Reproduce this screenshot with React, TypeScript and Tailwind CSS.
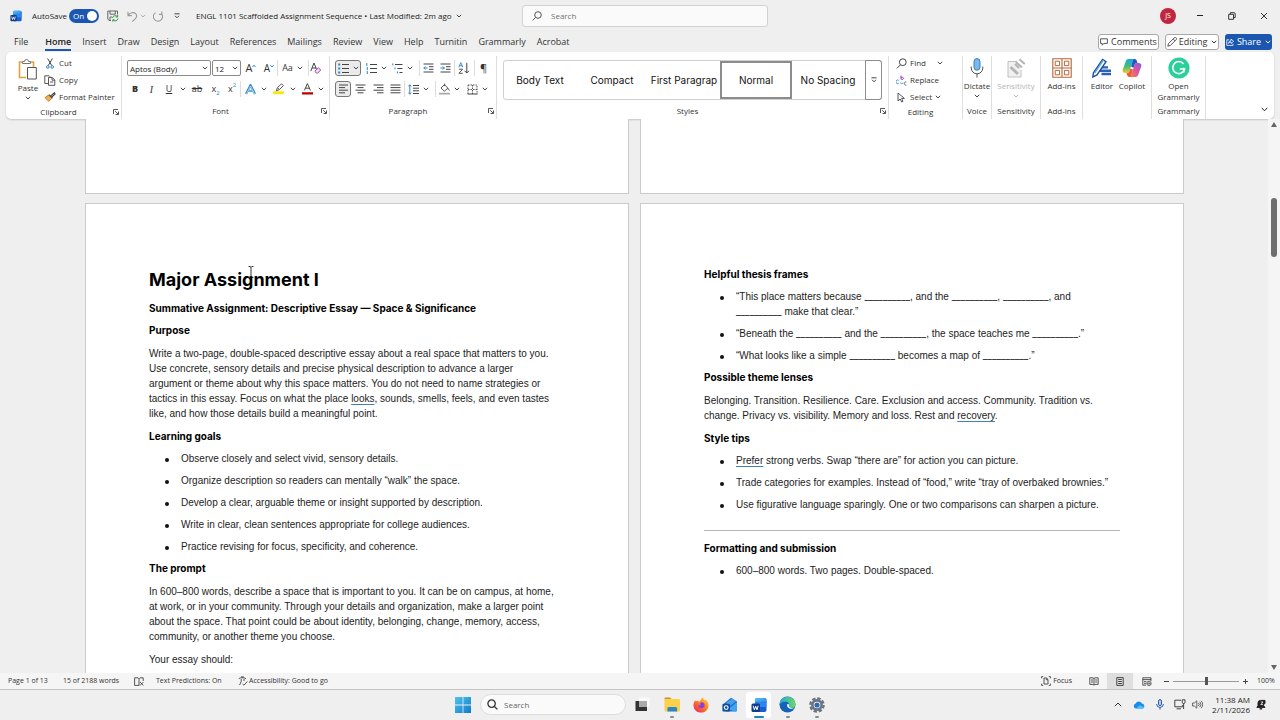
import React from "react";

type Kids = { children?: React.ReactNode };

function Svg({ w, h, vb, className = "", children }: Kids & { w: number; h: number; vb?: string; className?: string }) {
  return (
    <svg width={w} height={h} viewBox={vb ?? `0 0 ${w} ${h}`} fill="none" stroke="#444" strokeWidth="1" className={`shrink-0 ${className}`} aria-hidden="true">
      {children}
    </svg>
  );
}

function Chev({ className = "text-[#444]" }: { className?: string }) {
  return (
    <svg width="6" height="4" viewBox="0 0 6 4" fill="none" stroke="currentColor" strokeWidth="1" className={`shrink-0 ${className}`} aria-hidden="true">
      <path d="M0.8 0.8 3 3 5.2 0.8" />
    </svg>
  );
}

function Btn({ label, className, children }: Kids & { label: string; className: string }) {
  return (
    <button type="button" aria-label={label} className={`flex h-4 shrink-0 items-center justify-center ${className}`}>
      {children}
    </button>
  );
}

function Sep() {
  return <span className="-mr-px h-4 w-px shrink-0 bg-[#dcdcdc]" />;
}

function Group({ name, className, launcher, children }: Kids & { name: string; className: string; launcher?: boolean }) {
  return (
    <section aria-label={name} className={`flex shrink-0 flex-col border-r border-[#dedede] ${className}`}>
      <div className="h-12">{children}</div>
      <div className={`relative flex h-4 items-center justify-center text-[8px] leading-4 text-[#333] ${launcher ? "pr-[10px]" : ""}`}>
        {name}
        {launcher && (
          <button type="button" aria-label={`${name} settings`} className="absolute right-[2px] top-[5px]">
            <Svg w={6} h={6}>
              <path d="M0.5 5V0.5H5M2.2 2.2 5.2 5.2M5.5 2.5V5.5H2.5" strokeWidth="0.9" />
            </Svg>
          </button>
        )}
      </div>
    </section>
  );
}

function BigBtn({ label, className = "", dim, chev, children }: Kids & { label: React.ReactNode; className?: string; dim?: boolean; chev?: boolean }) {
  return (
    <button type="button" className={`flex flex-col items-center text-[8px] leading-[11px] ${dim ? "text-[#b5b5b5]" : "text-[#333]"} ${className}`}>
      <span className="flex h-6 items-center justify-center">{children}</span>
      <span className="block">{label}</span>
      {chev && <Chev className={dim ? "mt-[3px] text-[#b5b5b5]" : "mt-[3px] text-[#444]"} />}
    </button>
  );
}

function Bars({ xs }: { xs: [number, number][] }) {
  return (
    <Svg w={11} h={10}>
      {xs.map(([a, b], i) => (
        <path key={i} d={`M${a} ${1 + i * 2.6}H${b}`} />
      ))}
    </Svg>
  );
}

function WordLogo({ size }: { size: number }) {
  return (
    <svg width={size} height={size} viewBox="0 0 16 16" className="shrink-0" aria-hidden="true">
      <defs>
        <linearGradient id="wl" x1="0" y1="0" x2="1" y2="1">
          <stop offset="0" stopColor="#58c8f5" />
          <stop offset="1" stopColor="#2b7de9" />
        </linearGradient>
      </defs>
      <rect x="4" y="1" width="11.5" height="14" rx="2" fill="#1a5fd0" />
      <path d="M6 1h7.5a2 2 0 0 1 2 2v2.5H4V3a2 2 0 0 1 2-2z" fill="url(#wl)" />
      <path d="M4 5.5h11.5V10H4z" fill="#2f86ee" />
      <rect x="0.5" y="6.5" width="8.5" height="8.5" rx="1.5" fill="#0f3c8f" />
      <path d="M2.2 8.8l1.2 4 1.3-3.6 1.3 3.6 1.2-4" stroke="#fff" strokeWidth="1" fill="none" />
    </svg>
  );
}

function TitleBar() {
  return (
    <header className="grid h-8 shrink-0 grid-cols-[1fr_246px_1fr] items-center pl-[10px] text-[8px] text-[#222]">
      <div className="flex items-center">
        <WordLogo size={12} />
        <label className="ml-[10px] flex items-center gap-[6px]">
          <span className="w-[31px] whitespace-nowrap">AutoSave</span>
          <span className="relative flex h-[14px] w-[30px] items-center rounded-full bg-[#1b57b0] pl-1 text-white">
            <input type="checkbox" defaultChecked className="absolute inset-0 appearance-none" />
            On
            <span className="ml-auto mr-[2px] size-[10px] rounded-full bg-white" />
          </span>
        </label>
        <Btn label="Save" className="ml-[7px] w-[14px]">
          <Svg w={12} h={12}>
            <path d="M4 10.5H2L0.8 9V1H10.5V4.5M3 1V4.2H8.3V1M3 10.5V7H5" stroke="#666" />
            <path d="M5.5 8A2.8 2.8 0 0 1 10.5 6.8M10.7 5V7H8.8M11 8.6A2.8 2.8 0 0 1 6.2 10M5.8 11.6V9.8H7.6" stroke="#2a9a4c" />
          </Svg>
        </Btn>
        <Btn label="Undo" className="ml-[6px] w-3">
          <Svg w={11} h={11}>
            <path d="M1 0.8V4.6H4.8M1.2 4.4C3 1.6 6.5 0.8 8.6 2.6C10.6 4.6 9.6 6.4 8.2 7.8L5.2 10.6" stroke="#9a9a9a" strokeWidth="1.1" />
          </Svg>
        </Btn>
        <Chev className="ml-[2px] text-[#b0b0b0]" />
        <Btn label="Redo" className="ml-[6px] w-3">
          <Svg w={11} h={11}>
            <path d="M8.8 0.6V3.4H6M2.6 1.6A4.6 4.6 0 1 0 8.6 2.8" stroke="#9a9a9a" strokeWidth="1.1" />
          </Svg>
        </Btn>
        <Btn label="Customize toolbar" className="ml-[9px] w-2">
          <Svg w={6} h={6}>
            <path d="M0.5 0.8H5.5M1 2.8 3 4.8 5 2.8" />
          </Svg>
        </Btn>
        <button type="button" className="ml-[15px] flex items-center gap-1 whitespace-nowrap">
          <span>ENGL 1101 Scaffolded Assignment Sequence • Last Modified: 2m ago</span>
          <Chev />
        </button>
      </div>
      <label className="flex h-[22px] items-center gap-[9px] rounded-[3px] border border-[#d2d2d2] bg-[#fafafa] pl-[9px]">
        <Svg w={10} h={10}>
          <circle cx="6" cy="4" r="3.3" stroke="#555" />
          <path d="M3.6 6.4 0.6 9.4" stroke="#555" />
        </Svg>
        <input aria-label="Search" placeholder="Search" className="w-full bg-transparent text-[8px] outline-none placeholder:text-[#707070]" />
      </label>
      <div className="flex items-center justify-end">
        <button type="button" className="mr-2 flex size-4 items-center justify-center rounded-full bg-[#c0273e] text-[7px] text-white">JS</button>
        <Btn label="Minimize" className="w-8"><Svg w={8} h={8}><path d="M1 3.5H7" stroke="#222" /></Svg></Btn>
        <Btn label="Restore" className="w-8"><Svg w={8} h={8}><path d="M0.7 2.3H5.5V7.3H0.7ZM2.3 2V0.7H6.2A1 1 0 0 1 7.2 1.7V5.6H5.8" stroke="#222" strokeWidth="0.9" /></Svg></Btn>
        <Btn label="Close" className="w-8"><Svg w={8} h={8}><path d="M1 1 7 7M7 1 1 7" stroke="#222" strokeWidth="0.9" /></Svg></Btn>
      </div>
    </header>
  );
}

const TABS = ["Home", "Insert", "Draw", "Design", "Layout", "References", "Mailings", "Review", "View", "Help", "Turnitin", "Grammarly", "Acrobat"];

function TabBar() {
  return (
    <div className="flex h-5 shrink-0 items-center pl-[14px] pr-2 text-[9px] text-[#333]">
      <button type="button" className="mr-[17px] border-b-2 border-transparent leading-[15px]">File</button>
      <nav className="flex gap-[11px]">
        {TABS.map((t) => (
          <button key={t} type="button" className={t === "Home" ? "border-b-2 border-[#1b57b0] font-semibold leading-[15px] text-[#222]" : "border-b-2 border-transparent leading-[15px]"}>
            {t}
          </button>
        ))}
      </nav>
      <div className="ml-auto flex gap-[6px]">
        <button type="button" className="flex h-4 w-[61px] items-center justify-center gap-[3px] rounded-[3px] border border-[#a8a8a8] bg-white">
          <Svg w={8} h={8}><path d="M0.6 0.8H7.4V5.4H3.8L2.2 7.2V5.4H0.6Z" strokeWidth="0.9" /></Svg>
          Comments
        </button>
        <button type="button" className="flex h-4 w-[54px] items-center justify-center gap-[2px] rounded-[3px] border border-[#a8a8a8] bg-white">
          <Svg w={10} h={10}><path d="M0.8 9.2 1.6 6.4 7.4 0.8A1.2 1.2 0 0 1 9.2 2.6L3.5 8.4ZM6.2 2 8 3.8" strokeWidth="0.9" /></Svg>
          Editing
          <Chev className="ml-[2px] text-[#333]" />
        </button>
        <button type="button" className="flex h-4 w-[47px] items-center justify-center gap-[3px] rounded-[3px] bg-[#1b57b0] text-white">
          <Svg w={8} h={8}><path d="M3 1.8H0.8V7.4H7V5.8M2.4 5.4C2.6 3.6 3.8 2.8 5 2.8V1L7.6 3.3 5 5.5V4C4 4 3.2 4.4 2.4 5.4Z" stroke="#fff" strokeWidth="0.8" /></Svg>
          Share
          <Chev className="ml-[1px] text-white" />
        </button>
      </div>
    </div>
  );
}

function Combo({ label, value, className }: { label: string; value: string; className: string }) {
  return (
    <label className={`flex h-4 shrink-0 items-center rounded-[2px] border border-[#8a8a8a] bg-white pr-[2px] ${className}`}>
      <select aria-label={label} className="min-w-0 flex-1 appearance-none bg-transparent pl-[2px] text-[8px] leading-[13px] text-[#222] outline-none">
        <option>{value}</option>
      </select>
      <Chev />
    </label>
  );
}

function ClipboardGroup() {
  return (
    <Group name="Clipboard" className="w-[116px]" launcher>
      <div className="flex gap-[6px] pl-[10px]">
        <BigBtn label="Paste" className="w-[24px] pt-[2px]" chev>
          <Svg w={20} h={22}>
            <path d="M4 3H1.5V18.5H8M13 3H15.5V8" stroke="#e0a23c" strokeWidth="1.6" />
            <path d="M4.5 4.5V2.5H6.5A2 2 0 0 1 10.5 2.5H12.5V4.5Z" fill="#fff" stroke="#777" />
            <path d="M9.5 8.5H18.3V20H9.5Z" fill="#fff" stroke="#555" />
          </Svg>
        </BigBtn>
        <div className="flex flex-col gap-[3px] text-[8px] leading-[14px] text-[#333]">
          <button type="button" className="flex items-center gap-[5px]">
            <Svg w={8} h={11}>
              <path d="M1.6 0.5 5.8 7.6M6.4 0.5 2.2 7.6" stroke="#444" />
              <circle cx="1.8" cy="9" r="1.3" stroke="#2b88c9" /><circle cx="6.2" cy="9" r="1.3" stroke="#2b88c9" />
            </Svg>
            Cut
          </button>
          <button type="button" className="-ml-[2px] flex items-center gap-[3px]">
            <Svg w={12} h={11}>
              <path d="M4.5 8.5H0.8V0.8H5.2L6.2 1.8M4.5 2.5H8.3L10.8 5V10.3H4.5ZM8 2.6V5.2H10.7M6 7H9.2" strokeWidth="0.9" />
            </Svg>
            Copy
          </button>
          <button type="button" className="-ml-[2px] flex items-center gap-[3px] whitespace-nowrap">
            <Svg w={12} h={10}>
              <path d="M1 5.6 4.6 3 7.8 6.4 4.8 9.4Z" fill="#f0b155" stroke="#c9822a" />
              <path d="M5 2.6 8.4 6M7 3.6 10.4 0.8 11 2.2 8 4.8" stroke="#444" strokeWidth="1.2" />
            </Svg>
            Format Painter
          </button>
        </div>
      </div>
    </Group>
  );
}

function FontGroup() {
  return (
    <Group name="Font" className="w-[208px]" launcher>
      <div className="flex flex-col gap-[5px] pl-[5px] pt-1 text-[#333]">
        <div className="flex items-center">
          <Combo label="Font" value="Aptos (Body)" className="w-[84px]" />
          <Combo label="Font size" value="12" className="ml-px w-[29px]" />
          <Btn label="Grow font" className="ml-[2px] w-4 text-[11px]">A<Svg w={4} h={8}><path d="M0.5 3 2 1.2 3.5 3" stroke="#2b88c9" /></Svg></Btn>
          <Btn label="Shrink font" className="ml-[2px] w-4 text-[10px]">A<Svg w={4} h={8}><path d="M0.5 1.2 2 3 3.5 1.2" stroke="#2b88c9" /></Svg></Btn>
          <Sep />
          <Btn label="Change case" className="w-[31px] gap-1 text-[9px]">Aa<Chev /></Btn>
          <Sep />
          <Btn label="Clear formatting" className="w-4">
            <Svg w={12} h={12}>
              <path d="M0.8 9 4 1 6.6 7.4M2 6H6" />
              <path d="M5 9.2 8.4 5.8 10.8 8 7.6 11H6.4Z" stroke="#a444b5" fill="#f3e0f6" />
            </Svg>
          </Btn>
        </div>
        <div className="flex items-center text-[9px]">
          <Btn label="Bold" className="w-4 font-bold"><b>B</b></Btn>
          <Btn label="Italic" className="w-[17px] font-['Liberation_Serif',serif] text-[10px] italic">I</Btn>
          <Btn label="Underline" className="w-[18px] underline">U</Btn>
          <Btn label="Underline style" className="w-[9px]"><Chev /></Btn>
          <Btn label="Strikethrough" className="w-5 line-through">ab</Btn>
          <Btn label="Subscript" className="w-[17px]">x<span className="self-end text-[6px] leading-[7px] text-[#2b88c9]">2</span></Btn>
          <Btn label="Superscript" className="w-4">x<span className="self-start text-[6px] leading-[9px] text-[#2b88c9]">2</span></Btn>
          <Sep />
          <Btn label="Text effects" className="w-5">
            <Svg w={11} h={11}>
              <path d="M1 10 5.5 1.2 10 10M3 7H8" stroke="#2b88c9" strokeWidth="2.2" />
              <path d="M1.4 10 5.5 2 9.6 10M3.2 7H7.8" stroke="#fff" strokeWidth="0.6" />
            </Svg>
          </Btn>
          <Btn label="Text effects menu" className="w-2"><Chev /></Btn>
          <Btn label="Highlight" className="w-[22px]">
            <Svg w={12} h={12}>
              <path d="M0 9.8H11" stroke="#f5ea14" strokeWidth="3" />
              <path d="M3.4 7.8 4.4 4.6 8.6 0.8 10.4 2.6 6.4 6.6ZM4.6 4.8 6.2 6.4" strokeWidth="0.9" />
            </Svg>
          </Btn>
          <Btn label="Highlight menu" className="w-[6px]"><Chev /></Btn>
          <Btn label="Font color" className="w-[22px]">
            <Svg w={11} h={12}>
              <path d="M2.4 7.4 5.4 0.6 8.4 7.4M3.4 5.2H7.4" />
              <path d="M0 10.4H11" stroke="#c00000" strokeWidth="2.4" />
            </Svg>
          </Btn>
          <Btn label="Font color menu" className="w-[6px]"><Chev /></Btn>
        </div>
      </div>
    </Group>
  );
}

function ListIcon({ kind }: { kind: "dots" | "nums" | "tree" }) {
  return (
    <Svg w={11} h={11}>
      {kind === "tree" ? (
        <>
          <path d="M3 1.5H10.5M5.4 5.5H10.5M7.4 9.5H10.5" />
          <path d="M0.8 0.4V2.4M3 4.4V6.4M5.4 8.4V10.4" stroke="#2b88c9" />
        </>
      ) : (
        <>
          <path d="M4 1.5H11M4 5.5H11M4 9.5H11" />
          {kind === "dots" ? (
            <path d="M0.2 1.5H2.2M0.2 5.5H2.2M0.2 9.5H2.2" stroke="#2b88c9" strokeWidth="2" />
          ) : (
            <path d="M0.8 0V3M1.3 4V7M1.3 8V11" stroke="#2b88c9" />
          )}
        </>
      )}
    </Svg>
  );
}

function ParagraphGroup() {
  return (
    <Group name="Paragraph" className="w-[167px]" launcher>
      <div className="flex flex-col gap-[5px] pl-[5px] pt-1">
        <div className="flex items-center">
          <Btn label="Bullets" className="w-[26px] gap-1 rounded-[3px] border border-[#777] bg-[#ebebeb]"><ListIcon kind="dots" /><Chev /></Btn>
          <Btn label="Numbering" className="ml-[2px] w-[26px] gap-1"><ListIcon kind="nums" /><Chev /></Btn>
          <Btn label="Multilevel list" className="w-[27px] gap-1"><ListIcon kind="tree" /><Chev /></Btn>
          <span className="w-[3px]" />
          <Sep />
          <Btn label="Decrease indent" className="w-[18px]">
            <Svg w={11} h={10}><path d="M0.5 1H10.5M6 3.7H10.5M6 6.3H10.5M0.5 9H10.5" /><path d="M4.6 5H0.8M2.4 3.4 0.8 5 2.4 6.6" stroke="#2b88c9" /></Svg>
          </Btn>
          <Btn label="Increase indent" className="w-[17px]">
            <Svg w={11} h={10}><path d="M0.5 1H10.5M6 3.7H10.5M6 6.3H10.5M0.5 9H10.5" /><path d="M0.4 5H4.4M2.8 3.4 4.4 5 2.8 6.6" stroke="#2b88c9" /></Svg>
          </Btn>
          <Sep />
          <Btn label="Sort" className="w-[20px]">
            <Svg w={12} h={12}>
              <path d="M0.8 5.2 2.8 0.6 4.8 5.2M1.4 3.8H4.2" stroke="#2b88c9" strokeWidth="0.9" />
              <path d="M0.9 7.2H4.6L0.9 11.3H4.8" strokeWidth="0.9" />
              <path d="M8.8 0.8V11M6.6 8.8 8.8 11 11 8.8" />
            </Svg>
          </Btn>
          <Sep />
          <Btn label="Show paragraph marks" className="w-[19px] text-[11px] text-[#333]">¶</Btn>
        </div>
        <div className="flex items-center">
          <Btn label="Align left" className="w-4 rounded-[3px] border border-[#777] bg-[#ebebeb]"><Bars xs={[[1, 10], [1, 7], [1, 10], [1, 7]]} /></Btn>
          <Btn label="Center" className="ml-px w-[17px]"><Bars xs={[[0.5, 10.5], [2.5, 8.5], [0.5, 10.5], [2.5, 8.5]]} /></Btn>
          <Btn label="Align right" className="w-[18px]"><Bars xs={[[0.5, 10.5], [4, 10.5], [0.5, 10.5], [4, 10.5]]} /></Btn>
          <Btn label="Justify" className="w-[17px]"><Bars xs={[[0.5, 10.5], [0.5, 10.5], [0.5, 10.5], [0.5, 10.5]]} /></Btn>
          <Sep />
          <Btn label="Line spacing" className="ml-px w-[26px] gap-1">
            <Svg w={11} h={11}><path d="M5 1.5H11M5 4.2H11M5 6.8H11M5 9.5H11" /><path d="M1.8 0.8V10.2M0.4 2.4 1.8 0.8 3.2 2.4M0.4 8.6 1.8 10.2 3.2 8.6" stroke="#2b88c9" /></Svg>
            <Chev />
          </Btn>
          <span className="w-1" />
          <Sep />
          <Btn label="Shading" className="ml-px w-[26px] gap-1">
            <Svg w={11} h={12}><path d="M5.6 0.6V3M2 5 5.4 1.6 9 5.2 5.4 8.2ZM9 5.2 10.4 7.6" strokeWidth="0.9" /><path d="M0 10.6H11" stroke="#aaa" strokeWidth="1.8" /></Svg>
            <Chev />
          </Btn>
          <Btn label="Borders" className="ml-[2px] w-[26px] gap-1">
            <Svg w={11} h={11}><path d="M1 1H10V10M1 1V10M5.5 1V10M1 5.5H10" strokeDasharray="1.5 1" strokeWidth="0.9" /><path d="M0.5 10H10.5" strokeWidth="1.2" /></Svg>
            <Chev />
          </Btn>
        </div>
      </div>
    </Group>
  );
}

const STYLES = ["Body Text", "Compact", "First Paragrap", "Normal", "No Spacing"];

function StylesGroup() {
  return (
    <Group name="Styles" className="w-[392px]" launcher>
      <div className="mx-[6px] mt-1 flex h-10 w-[379px] rounded-[3px] border border-[#cfcfcf] font-['Inter',sans-serif] text-[10px] text-[#111]">
        {STYLES.map((s) => (
          <button key={s} type="button" className={s === "Normal" ? "w-[72px] whitespace-nowrap border-2 border-[#8c8c8c]" : "w-[72px] whitespace-nowrap border-2 border-transparent"}>
            {s}
          </button>
        ))}
        <button type="button" aria-label="More styles" className="-my-px -mr-px ml-auto flex w-[17px] items-center justify-center rounded-r-[3px] border border-[#8c8c8c]">
          <Svg w={6} h={6}><path d="M0.5 0.8H5.5M1 2.8 3 4.8 5 2.8" /></Svg>
        </button>
      </div>
    </Group>
  );
}

function EditingGroup() {
  return (
    <Group name="Editing" className="w-[74px] pr-[10px]">
      <div className="flex flex-col gap-[3px] pl-[7px] text-[8px] leading-[14px] text-[#333]">
        <button type="button" className="flex items-center gap-[3px]">
          <Svg w={11} h={11}><circle cx="6.8" cy="4.2" r="3.4" /><path d="M4.4 6.8 0.8 10.4" /></Svg>
          Find<Chev className="ml-[8px] text-[#444]" />
        </button>
        <button type="button" className="flex items-center gap-[3px]">
          <Svg w={11} h={11}>
            <path d="M5 0.5V4.4M5 3A1.2 1.2 0 1 1 5 3.6" stroke="#a444b5" />
            <path d="M2.8 5.4A1.8 1.8 0 1 0 2.8 8.2M4.2 7.5 5.8 9 7 7.6" stroke="#2b88c9" strokeWidth="0.9" />
            <path d="M10.4 7A1.6 1.6 0 1 0 10.4 10" stroke="#555" strokeWidth="0.9" />
          </Svg>
          Replace
        </button>
        <button type="button" className="flex items-center gap-[3px]">
          <Svg w={11} h={11}><path d="M2 1V9L4.2 7 5.6 10 7 9.4 5.6 6.4H8.4Z" strokeWidth="0.9" /></Svg>
          Select<Chev />
        </button>
      </div>
    </Group>
  );
}

function Ribbon() {
  return (
    <div className="mx-[6px] flex h-[67px] shrink-0 overflow-hidden rounded-[5px] bg-white pt-1 shadow-[0_1px_2px_rgba(0,0,0,0.18)]">
      <ClipboardGroup />
      <FontGroup />
      <ParagraphGroup />
      <StylesGroup />
      <EditingGroup />
      <Group name="Voice" className="w-[29px]">
        <BigBtn label="Dictate" className="w-full" chev>
          <Svg w={14} h={20}>
            <rect x="4" y="0.6" width="6" height="11.6" rx="3" fill="#7db8e8" stroke="#3182c0" />
            <path d="M1.2 8.5V10A5.8 5.8 0 0 0 12.8 10V8.5M7 15.8V19.6" stroke="#555" />
          </Svg>
        </BigBtn>
      </Group>
      <Group name="Sensitivity" className="w-[49px]">
        <BigBtn label="Sensitivity" className="w-full" dim chev>
          <Svg w={20} h={20}>
            <path d="M11 3.5H2V19H15V12" fill="#f1f1f1" stroke="#c0c0c0" />
            <path d="M4.5 9 12 16" stroke="#b5b5b5" strokeWidth="3" />
            <path d="M10 4 16 9.6M13.4 1.2 18.8 6M9 6 13 10" stroke="#b5b5b5" strokeWidth="2" />
          </Svg>
        </BigBtn>
      </Group>
      <Group name="Add-ins" className="w-[42px]">
        <BigBtn label="Add-ins" className="w-full">
          <Svg w={20} h={20}>
            <path d="M0.8 0.8H19.2V19.2H0.8ZM10 0.8V19.2M0.8 10H19.2" stroke="#b5653a" strokeWidth="1.1" />
            <path d="M3.2 3.2H7.6V7.6H3.2ZM12.4 3.2H16.8V7.6H12.4ZM3.2 12.4H7.6V16.8H3.2ZM12.4 12.4H16.8V16.8H12.4Z" stroke="#b5653a" />
          </Svg>
        </BigBtn>
      </Group>
      <section aria-label="Assistants" className="flex w-[69px] shrink-0 justify-center border-r border-[#dedede]">
        <BigBtn label="Editor" className="w-[30px]">
          <Svg w={22} h={20}>
            <path d="M8 12.8H20M10.5 16H20M11 9.4H17" stroke="#2b62b5" strokeWidth="2.4" />
            <path d="M2.4 15 11.6 1.4 15 3.6 6 17 1.8 19Z" fill="#fff" stroke="#1c4f9c" strokeWidth="1.4" />
            <path d="M3.6 15.2 12.4 2.2" stroke="#5aa7e0" strokeWidth="1.4" />
          </Svg>
        </BigBtn>
        <BigBtn label="Copilot" className="w-[30px]">
          <svg width="20" height="20" viewBox="0 0 20 20" aria-hidden="true">
            <defs>
              <linearGradient id="cpa" x1="0" y1="0" x2="0" y2="1">
                <stop offset="0" stopColor="#1ba8e8" /><stop offset="0.5" stopColor="#3cbf7a" /><stop offset="1" stopColor="#f3c52c" />
              </linearGradient>
              <linearGradient id="cpb" x1="1" y1="0" x2="0" y2="1">
                <stop offset="0" stopColor="#8a5cf0" /><stop offset="0.5" stopColor="#e0559a" /><stop offset="1" stopColor="#f58a3c" />
              </linearGradient>
            </defs>
            <path d="M12.6 1H6.4C4.6 1 4 2.4 3.4 4.2L0.8 11.4C0 13.6 1.4 15 3.4 15H5.2C6.6 15 7.2 14.2 7.6 12.8L10.2 4.6C10.6 3.4 11 2.8 12.2 2.8Z" fill="url(#cpa)" />
            <path d="M7.4 19H13.6C15.4 19 16 17.6 16.6 15.8L19.2 8.6C20 6.4 18.6 5 16.6 5H14.8C13.4 5 12.8 5.8 12.4 7.2L9.8 15.4C9.4 16.6 9 17.2 7.8 17.2Z" fill="url(#cpb)" />
            <path d="M12.6 1C14 1 14.6 2 15 3.4L15.4 5H14.6C13.4 5 12.8 5.8 12.4 7.2L11.6 9.8 9 8.4 10.2 4.6C10.6 3.4 11 1 12.6 1Z" fill="#2356c7" />
            <path d="M7.4 19C6 19 5.4 18 5 16.6L4.6 15H5.4C6.6 15 7.2 14.2 7.6 12.8L8.4 10.4 11 11.6 9.8 15.4C9.4 16.6 9 19 7.4 19Z" fill="#ef5a3a" />
          </svg>
        </BigBtn>
      </section>
      <Group name="Grammarly" className="w-[54px]">
        <BigBtn label={<>Open<br />Grammarly</>} className="w-full">
          <Svg w={22} h={22}>
            <circle cx="11" cy="11" r="10.6" fill="#2bcf9a" stroke="none" />
            <path d="M15.6 7A6 6 0 1 0 16.6 12H11.8" stroke="#fff" strokeWidth="1.6" />
            <path d="M15.8 10.8V15.6" stroke="#fff" strokeWidth="1.4" />
          </Svg>
        </BigBtn>
      </Group>
      <button type="button" aria-label="Collapse ribbon" className="ml-auto mr-[6px] self-end pb-[7px]">
        <Svg w={7} h={5}><path d="M0.7 0.8 3.5 3.8 6.3 0.8" stroke="#222" /></Svg>
      </button>
    </div>
  );
}

function H({ children }: Kids) {
  return <h2 className="mb-[7px] whitespace-nowrap font-['Inter',sans-serif] font-bold text-black">{children}</h2>;
}

function P({ children }: Kids) {
  return <p className="mb-2 mt-2 whitespace-nowrap">{children}</p>;
}

function Bullets({ items }: { items: React.ReactNode[] }) {
  return (
    <ul>
      {items.map((it, i) => (
        <li key={i} className="mb-[7px] flex whitespace-nowrap">
          <span className="mt-[7px] mr-[12px] ml-[16px] size-[4px] shrink-0 rounded-full bg-[#111]" />
          <span>{it}</span>
        </li>
      ))}
    </ul>
  );
}

function Mark({ children }: Kids) {
  return <span className="underline decoration-[#3f7fb5] decoration-1 underline-offset-2">{children}</span>;
}

function Blank() {
  return <span className="font-['Inter',sans-serif]">__________</span>;
}

function Page({ children }: Kids) {
  return (
    <article className="h-[704px] w-[544px] shrink-0 border border-[#cbcbcb] bg-white px-[63px] pt-[63px] font-['Liberation_Sans',sans-serif] text-[10px] leading-[15px] text-[#1c1c1c]">
      {children}
    </article>
  );
}

function DocumentArea() {
  return (
    <main className="flex min-h-0 flex-1 overflow-hidden">
      <div className="relative flex-1 overflow-hidden pl-px">
        <div className="flex justify-center gap-[11px]">
          <div className="h-[75px] w-[544px] shrink-0 border border-t-0 border-[#cbcbcb] bg-white" />
          <div className="h-[75px] w-[544px] shrink-0 border border-t-0 border-[#cbcbcb] bg-white" />
        </div>
        <div className="mt-[9px] flex justify-center gap-[11px]">
          <Page>
            <h1 className="mb-2 font-['Inter',sans-serif] text-[18px] font-bold leading-[26px] text-black">Major Assignment I</h1>
            <H>Summative Assignment: Descriptive Essay — Space &amp; Significance</H>
            <H>Purpose</H>
            <P>
              Write a two-page, double-spaced descriptive essay about a real space that matters to you.<br />
              Use concrete, sensory details and precise physical description to advance a larger<br />
              argument or theme about why this space matters. You do not need to name strategies or<br />
              tactics in this essay. Focus on what the place <Mark>looks</Mark>, sounds, smells, feels, and even tastes<br />
              like, and how those details build a meaningful point.
            </P>
            <H>Learning goals</H>
            <Bullets
              items={[
                "Observe closely and select vivid, sensory details.",
                "Organize description so readers can mentally “walk” the space.",
                "Develop a clear, arguable theme or insight supported by description.",
                "Write in clear, clean sentences appropriate for college audiences.",
                "Practice revising for focus, specificity, and coherence.",
              ]}
            />
            <H>The prompt</H>
            <P>
              In 600–800 words, describe a space that is important to you. It can be on campus, at home,<br />
              at work, or in your community. Through your details and organization, make a larger point<br />
              about the space. That point could be about identity, belonging, change, memory, access,<br />
              community, or another theme you choose.
            </P>
            <p>Your essay should:</p>
          </Page>
          <Page>
            <H>Helpful thesis frames</H>
            <Bullets
              items={[
                <>“This place matters because <Blank />, and the <Blank />, <Blank />, and<br /><Blank /> make that clear.”</>,
                <>“Beneath the <Blank /> and the <Blank />, the space teaches me <Blank />.”</>,
                <>“What looks like a simple <Blank /> becomes a map of <Blank />.”</>,
              ]}
            />
            <H>Possible theme lenses</H>
            <P>
              Belonging. Transition. Resilience. Care. Exclusion and access. Community. Tradition vs.<br />
              change. Privacy vs. visibility. Memory and loss. Rest and <Mark>recovery</Mark>.
            </P>
            <H>Style tips</H>
            <Bullets
              items={[
                <><Mark>Prefer</Mark> strong verbs. Swap “there are” for action you can picture.</>,
                "Trade categories for examples. Instead of “food,” write “tray of overbaked brownies.”",
                "Use figurative language sparingly. One or two comparisons can sharpen a picture.",
              ]}
            />
            <hr className="mb-[10px] mt-[18px] border-[#b5b5b5]" />
            <H>Formatting and submission</H>
            <Bullets items={["600–800 words. Two pages. Double-spaced."]} />
          </Page>
        </div>
        <Svg w={6} h={12} className="absolute left-[248px] top-[147px]">
          <path d="M0.5 0.5H2.2L3 1.3 3.8 0.5H5.5M3 1V11M0.5 11.5H2.2L3 10.7 3.8 11.5H5.5" stroke="#222" strokeWidth="0.9" />
        </Svg>
      </div>
      <div className="flex w-3 shrink-0 flex-col items-center justify-between bg-[#f5f5f5] py-[3px]">
        <Svg w={6} h={5}><path d="M3 0 6 5H0Z" fill="#666" stroke="none" /></Svg>
        <div className="mt-[71px] mb-auto h-[59px] w-[6px] rounded-full bg-[#6e6e6e]" />
        <Svg w={6} h={5}><path d="M0 0H6L3 5Z" fill="#666" stroke="none" /></Svg>
      </div>
    </main>
  );
}

function StatusBar() {
  return (
    <footer className="flex h-[17px] shrink-0 items-center border-b border-[#c4c4c4] bg-[#f5f5f5] pl-2 text-[7px] text-[#333]">
      <span className="w-[55px] whitespace-nowrap">Page 1 of 13</span>
      <span className="w-[71px] whitespace-nowrap">15 of 2188 words</span>
      <Svg w={10} h={9} className="mr-[12px]"><path d="M5 1.6V8.4H0.6V0.8H4L5 1.8 6 0.8H9.2V4M6 5 9.4 8.4M9.4 5 6 8.4" strokeWidth="0.9" /></Svg>
      <span className="w-[82px] whitespace-nowrap">Text Predictions: On</span>
      <Svg w={10} h={10} className="mr-[1px]"><path d="M0.8 2.6C3 1.4 5.4 1.4 8 2.6M3.2 3V5.6L1.6 9M6 3V5M4.4 1.6A0.8 0.8 0 1 1 4.5 1.6M4.6 8 6 9.2 9.4 5.4" strokeWidth="0.9" /></Svg>
      <span className="whitespace-nowrap">Accessibility: Good to go</span>
      <button type="button" className="ml-auto mr-[9px] flex items-center gap-[2px]">
        <Svg w={10} h={10}><path d="M0.6 2.4V0.6H2.2M7.8 0.6H9.4V2.4M0.6 7.6V9.4H2.2M7.8 9.4H9.4V7.6M3 2H5.6L7 3.4V8H3ZM5.4 2.2V3.8H7" strokeWidth="0.9" /></Svg>
        Focus
      </button>
      <Btn label="Read mode" className="w-[26px]"><Svg w={10} h={9}><path d="M5 1.2V8M0.8 0.8H4L5 1.6 6 0.8H9.2V7.4H6L5 8.2 4 7.4H0.8ZM2 3H4M2 5H4M6.2 3H8.2M6.2 5H8.2" strokeWidth="0.9" /></Svg></Btn>
      <Btn label="Print layout" className="w-[26px] bg-[#dedede]"><Svg w={8} h={9}><path d="M0.8 0.6H7.2V8.4H0.8ZM2.2 2.5H5.8M2.2 4.5H5.8M2.2 6.5H5.8" /></Svg></Btn>
      <Btn label="Web layout" className="mr-[3px] w-[27px]"><Svg w={10} h={9}><path d="M4 8.2H0.8V0.8H9V4M0.8 2.6H9M2 4.6H4.4M2 6.4H4" strokeWidth="0.9" /><circle cx="7" cy="6.4" r="2.2" strokeWidth="0.8" /><path d="M5 6.4H9M7 4.4V8.4" strokeWidth="0.6" /></Svg></Btn>
      <Btn label="Zoom out" className="mr-[3px] w-[7px]"><Svg w={5} h={5}><path d="M0 2.5H5" /></Svg></Btn>
      <input
        type="range"
        aria-label="Zoom"
        defaultValue={50}
        className="h-2 w-[66px] appearance-none bg-transparent [&::-webkit-slider-runnable-track]:h-px [&::-webkit-slider-runnable-track]:bg-[#9a9a9a] [&::-webkit-slider-thumb]:-mt-[4px] [&::-webkit-slider-thumb]:h-2 [&::-webkit-slider-thumb]:w-[3px] [&::-webkit-slider-thumb]:appearance-none [&::-webkit-slider-thumb]:bg-[#555]"
      />
      <Btn label="Zoom in" className="ml-[3px] w-[7px]"><Svg w={5} h={5}><path d="M0 2.5H5M2.5 0V5" /></Svg></Btn>
      <span className="ml-[8px] w-[23px]">100%</span>
    </footer>
  );
}

function TaskItem({ label, running, active, children }: Kids & { label: string; running?: boolean; active?: boolean }) {
  return (
    <button type="button" aria-label={label} className={`relative flex h-[26px] w-[25px] shrink-0 items-center justify-center rounded-[3px] ${active ? "bg-white" : ""}`}>
      {children}
      {running && <span className={`absolute bottom-0 h-[2px] rounded-full ${active ? "w-[10px] bg-[#2380c2]" : "w-1 bg-[#8a8a8a]"}`} />}
    </button>
  );
}

function Taskbar() {
  return (
    <footer className="grid h-[30px] shrink-0 grid-cols-[1fr_auto_1fr] items-center bg-[#efefef] pb-px text-[8px] text-[#222]">
      <span />
      <div className="flex items-center pl-1">
        <button type="button" aria-label="Start" className="mr-[9px]">
          <svg width="16" height="16" viewBox="0 0 16 16" aria-hidden="true">
            <defs><linearGradient id="win" x1="0" y1="0" x2="1" y2="1"><stop offset="0" stopColor="#4fc3ee" /><stop offset="1" stopColor="#0f7cc9" /></linearGradient></defs>
            <path d="M0 0H7.6V7.6H0ZM8.4 0H16V7.6H8.4ZM0 8.4H7.6V16H0ZM8.4 8.4H16V16H8.4Z" fill="url(#win)" />
          </svg>
        </button>
        <label className="mr-1 flex h-[21px] w-[146px] items-center gap-[6px] rounded-full border border-[#dcdcdc] bg-[#fafafa] pl-[6px]">
          <Svg w={11} h={11}><circle cx="4.6" cy="4.6" r="3.7" stroke="#333" strokeWidth="1.3" /><path d="M7.2 7.2 10.4 10.4" stroke="#333" strokeWidth="1.3" /></Svg>
          <input aria-label="Taskbar search" placeholder="Search" className="w-full bg-transparent text-[8px] outline-none placeholder:text-[#666]" />
        </label>
        <div className="flex gap-[4px]">
          <TaskItem label="Task view">
            <Svg w={15} h={15}><rect x="4" y="0.5" width="10.5" height="9.5" fill="#fafafa" stroke="none" /><rect x="0.5" y="4" width="11.5" height="10" fill="#333" stroke="none" /><rect x="4" y="4" width="8" height="6" fill="#aaa" stroke="none" /></Svg>
          </TaskItem>
          <TaskItem label="File Explorer" running>
            <Svg w={16} h={15}>
              <path d="M0.5 1.5A1 1 0 0 1 1.5 0.5H6L8 2.5H0.5Z" fill="#c9941a" stroke="none" />
              <rect x="0.5" y="2" width="15.5" height="12.5" rx="1.2" fill="#fbd04b" stroke="none" />
              <path d="M3.4 14.5V11.5A1.5 1.5 0 0 1 4.9 10H11.6A1.5 1.5 0 0 1 13.1 11.5V14.5Z" fill="#2a86c7" stroke="none" />
            </Svg>
          </TaskItem>
          <TaskItem label="Firefox">
            <svg width="16" height="16" viewBox="0 0 16 16" aria-hidden="true">
              <defs><linearGradient id="ff" x1="1" y1="0" x2="0.2" y2="1"><stop offset="0" stopColor="#ffe04a" /><stop offset="0.45" stopColor="#ff8a1e" /><stop offset="1" stopColor="#ee2a5b" /></linearGradient></defs>
              <path d="M8 15.6C3.8 15.6 0.5 12.4 0.5 8.2C0.5 6 1.3 4.2 2.4 3L2.6 4.6C3.4 3.8 4 3.6 5 3.8C5.2 4.4 5.8 4.6 6.6 4.8L5.6 6 8 2.6C8.2 1.4 9.2 0.6 10 0.2C10 1.8 11 2.6 12.2 3.6L12.6 2.4C14.6 4.2 15.6 6.2 15.5 8.4C15.4 12.4 12.2 15.6 8 15.6Z" fill="url(#ff)" />
              <path d="M8 5.4C10.2 5 12 6.6 11.6 8.8C11.2 11 8.6 12 6.6 10.8C5.4 10 5 8.8 5.6 7.6C6 8.4 6.8 8.8 7.8 8.2C7 7.6 7 6.2 8 5.4Z" fill="#8a3fe0" />
            </svg>
          </TaskItem>
          <TaskItem label="Outlook">
            <Svg w={16} h={16}>
              <path d="M2 6.5 9 0.8 15 4.6V13A1.5 1.5 0 0 1 13.5 14.5H4A2 2 0 0 1 2 12.5Z" fill="#1f6fd6" stroke="none" />
              <path d="M4 5.8 10.4 1.4 14 4.2 7.4 9.4Z" fill="#4a9fe8" stroke="none" />
              <path d="M15 5 6 12.5 14 14.4A1.4 1.4 0 0 0 15 13Z" fill="#3fa4ee" stroke="none" />
              <rect x="0.4" y="6.8" width="7.6" height="7.6" rx="1.2" fill="#0f4f9e" stroke="none" />
              <circle cx="4.2" cy="10.6" r="1.9" stroke="#fff" strokeWidth="1.1" />
            </Svg>
          </TaskItem>
          <TaskItem label="Word" running active><WordLogo size={16} /></TaskItem>
          <TaskItem label="Edge" running>
            <svg width="17" height="17" viewBox="0 0 17 17" aria-hidden="true">
              <defs><linearGradient id="eg" x1="0" y1="0.3" x2="1" y2="0.3"><stop offset="0" stopColor="#1fa8dc" /><stop offset="1" stopColor="#6bdc5a" /></linearGradient></defs>
              <circle cx="8.5" cy="8.5" r="8" fill="#1463b8" />
              <path d="M0.6 7.6A8 8 0 0 1 16.5 8.4C16.5 10.6 14.8 11.8 12.8 11.8C10.8 11.8 9.6 11 9.8 10.2C10.6 9.4 10.4 6.4 7.4 5.8C4 5.2 1 7 0.6 9.4Z" fill="url(#eg)" />
              <path d="M8.4 8C7.4 10.2 9.2 12.8 12.4 12.8C13.8 12.8 15 12.3 15.8 11.6C14.6 12.2 10.4 12.2 9.8 10.2C10.2 9.6 10 8.6 9.4 8Z" fill="#fff" />
            </svg>
          </TaskItem>
          <TaskItem label="Settings" running>
            <Svg w={16} h={16}>
              <circle cx="8" cy="8" r="6.6" stroke="#6b7480" strokeWidth="2.4" strokeDasharray="3.4 1.784" />
              <circle cx="8" cy="8" r="4.6" fill="#fff" stroke="#6b7480" strokeWidth="2.6" />
              <circle cx="8" cy="8" r="2.6" fill="#2c6bb0" stroke="none" />
            </Svg>
          </TaskItem>
        </div>
      </div>
      <div className="flex items-center justify-end pr-[14px]">
        <Btn label="Hidden icons" className="w-[20px]"><Svg w={8} h={5}><path d="M0.8 4.2 4 1 7.2 4.2" stroke="#333" /></Svg></Btn>
        <Btn label="OneDrive" className="w-[21px]">
          <Svg w={12} h={8}><path d="M3 7.6A2.7 2.7 0 0 1 2.6 2.4A3.6 3.6 0 0 1 9 2.4A2.7 2.7 0 0 1 9.6 7.6Z" fill="#1c8be8" stroke="none" /><path d="M3 7.6 6.6 4.2 11.4 6.2A2 2 0 0 1 9.6 7.6Z" fill="#4fc0f8" stroke="none" /></Svg>
        </Btn>
        <Btn label="Microphone" className="w-[21px]"><Svg w={8} h={11}><rect x="2.5" y="0.6" width="3" height="6" rx="1.5" stroke="#2f5ea8" fill="#b9cdea" /><path d="M0.6 5A3.4 3.4 0 0 0 7.4 5M4 8.4V10.6" stroke="#2f5ea8" /></Svg></Btn>
        <Btn label="Network" className="w-[20px]"><Svg w={12} h={11}><path d="M7 1.2H0.8V7.8H8.4V6M2.6 9.8H7M9.6 4.4V10M8.2 0.8V3.2A1.2 1.2 0 0 0 11 3.2V0.8Z" /></Svg></Btn>
        <Btn label="Volume" className="w-[14px]"><Svg w={11} h={9}><path d="M0.6 3H2.4L4.8 0.8V8.2L2.4 6H0.6ZM6.4 3A2 2 0 0 1 6.4 6M7.8 1.8A4 4 0 0 1 7.8 7.2M9.2 0.8A5.4 5.4 0 0 1 9.2 8.2" strokeWidth="0.8" /></Svg></Btn>
        <div className="w-[46px] whitespace-nowrap text-right leading-[10px]">11:38 AM<br />2/11/2026</div>
        <Btn label="Notifications" className="ml-[6px] w-[10px]"><Svg w={10} h={11}><path d="M0.8 8.4 2 6.8V4A2.6 2.6 0 0 1 4.6 1.4H9V4.6L7.6 5V6.8L9 8.4Z" fill="#222" stroke="#222" /><path d="M3.6 9.8H6.2" stroke="#222" strokeWidth="1.4" /><path d="M4.8 3H7L4.8 5.6H7" stroke="#fff" strokeWidth="0.8" /></Svg></Btn>
      </div>
    </footer>
  );
}

export default function App() {
  return (
    <div className="flex h-screen flex-col overflow-hidden bg-[#efefef] font-['Open_Sans',sans-serif]">
      <TitleBar />
      <TabBar />
      <Ribbon />
      <DocumentArea />
      <StatusBar />
      <Taskbar />
    </div>
  );
}
